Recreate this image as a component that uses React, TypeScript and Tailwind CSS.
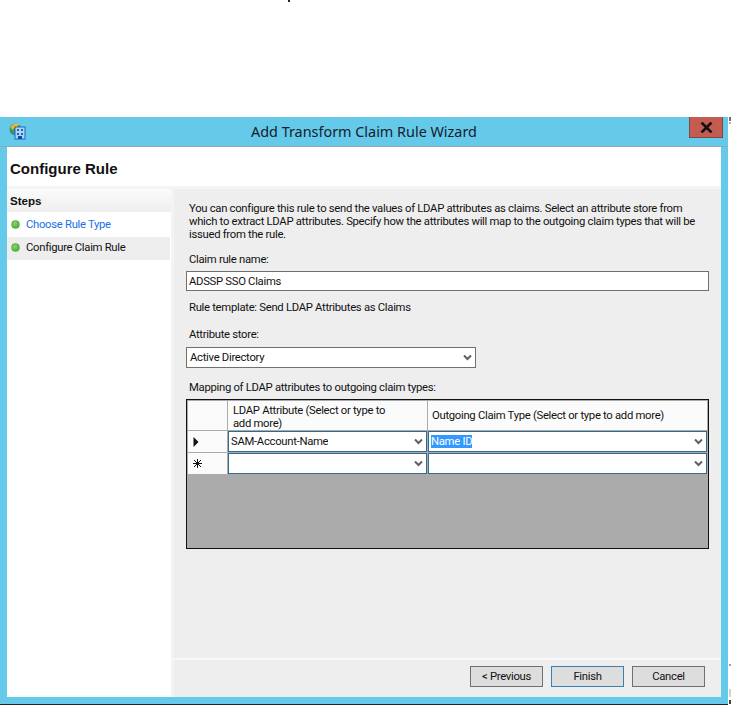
import React from "react";

const Chevron = () => (
  <svg width="9" height="7" viewBox="0 0 9 7" className="shrink-0">
    <path d="M1 1.5 L4.5 5 L8 1.5" fill="none" stroke="#606060" strokeWidth="2" />
  </svg>
);

const Dot = () => (
  <span className="w-[9px] h-[9px] rounded-full shrink-0 bg-[radial-gradient(circle_at_40%_35%,#7fdc5a,#3fa52c)] border border-[#6da765]" />
);

const Cell = ({ children }: { children?: React.ReactNode }) => (
  <div className="h-[21px] bg-white border border-[#336b8f] flex items-center justify-between pl-[2px] pr-[3px] min-w-0">
    <span className="truncate">{children}</span>
    <Chevron />
  </div>
);

const RowHead = ({ children }: { children: React.ReactNode }) => (
  <div className="h-[21px] bg-[#fbfbfb] flex items-center pl-[5px]">{children}</div>
);

const Btn = ({ label, focus }: { label: string; focus?: boolean }) => (
  <div
    className={`w-[73px] h-[21px] bg-[#dddddd] border flex items-center justify-center ${
      focus ? "border-[#3c7fb1]" : "border-[#707070]"
    }`}
  >
    {label}
  </div>
);

export default function App() {
  return (
    <div className="w-[731px] h-[706px] bg-white overflow-hidden relative font-['Roboto',sans-serif] text-[11.3px] tracking-[-0.3px] leading-[13px] text-[#111]">
      <div className="h-[117px] relative">
        <span className="absolute left-[288px] top-0 w-[2px] h-[2px] bg-[#222]" />
      </div>
      <span className="absolute left-[729px] top-[117px] w-[2px] h-[4px] bg-[#707070]" />
      <span className="absolute left-[729px] top-[122px] w-[2px] h-[2px] bg-[#b0b0b0]" />
      <span className="absolute left-[729px] top-[664px] w-[2px] h-[2px] bg-[#a0a0a0]" />
      <span className="absolute left-[729px] top-[689px] w-[2px] h-[8px] bg-[#c8d8d8]" />
      <span className="absolute left-[729px] top-[700px] w-[2px] h-[4px] bg-[#444]" />
      <div className="w-[728px] h-[588px] bg-[#65c9ea] border-b-[1px] border-[#222] flex flex-col relative">
        <div className="h-[30px] flex items-center justify-center border-b border-[#8aa9b8] shrink-0 relative">
          <svg width="17" height="17" viewBox="0 0 17 17" className="absolute left-[9px] top-[6px]">
            <circle cx="6.5" cy="6.5" r="6" fill="#3f9e4a" />
            <path d="M1.5 4 A6 6 0 0 1 10 1.5 L8 4 L5 5 L3.5 7 Z" fill="#f2b632" />
            <path d="M1 8 L4 8 L5 11 L3 11 Z" fill="#2f7fd0" />
            <rect x="6" y="4" width="10" height="12" fill="#a9d6f2" stroke="#1f66c0" />
            <path d="M8 6h2v2h-2zM12 6h2v2h-2zM8 10h2v2h-2zM12 10h2v2h-2z" fill="#1f66c0" />
            <rect x="9" y="13" width="4" height="3" fill="#1248a8" />
          </svg>
          <span className="font-['Noto_Sans',sans-serif] text-[14.4px] tracking-normal leading-[18px] text-[#16202a]">
            Add Transform Claim Rule Wizard
          </span>
          <div className="absolute left-[689px] top-0 w-[34px] h-[21px] bg-[#c45c52] border border-[#7a4a44] border-t-0 flex items-center justify-center">
            <svg width="13" height="11" viewBox="0 0 13 11">
              <path d="M1.5 0.5 L11.5 10.5 M11.5 0.5 L1.5 10.5" stroke="#111" strokeWidth="2.6" fill="none" />
            </svg>
          </div>
        </div>
        <div className="flex-1 flex flex-col ml-[7px] mr-[7px] mb-[7px] min-h-0 bg-[#f4f4f4]">
          <div className="h-[39px] bg-white shrink-0 flex items-center pl-[3px] pt-[4px] mb-[3px] font-bold font-['Liberation_Sans',sans-serif] tracking-normal text-[15px]">
            Configure Rule
          </div>
          <div className="flex-1 flex gap-[3px] min-h-0">
            <div className="w-[164px] bg-white flex flex-col shrink-0">
              <div className="h-[23px] bg-gradient-to-b from-[#fbfbfb] to-[#eeeeee] flex items-center pl-[3px] font-bold font-['Liberation_Sans',sans-serif] tracking-normal text-[11.6px]">
                Steps
              </div>
              <div className="h-[25px] flex items-center gap-[6px] pl-[4px] pb-[1px] text-[#1a6fe8]">
                <Dot />
                <span>Choose Rule Type</span>
              </div>
              <div className="h-[23px] w-[163px] flex items-center gap-[6px] pl-[4px] pb-[2px] bg-[#eeeeee]">
                <Dot />
                <span>Configure Claim Rule</span>
              </div>
            </div>
            <div className="flex-1 bg-[#eeeeee] flex flex-col min-w-0">
              <div className="flex-1 pl-[12px] pr-[12px] pt-[13px] min-h-0">
                <p className="ml-[3px] whitespace-nowrap">
                  You can configure this rule to send the values of LDAP attributes as claims. Select an attribute store from
                  <br />
                  which to extract LDAP attributes. Specify how the attributes will map to the outgoing claim types that will be
                  <br />
                  issued from the rule.
                </p>
                <div className="ml-[3px] mt-[12px]">Claim rule name:</div>
                <div className="mt-[5px] h-[20px] bg-white border border-[#707070] flex items-center pl-[2px]">ADSSP SSO Claims</div>
                <div className="ml-[3px] mt-[10px]">Rule template: Send LDAP Attributes as Claims</div>
                <div className="ml-[3px] mt-[14px]">Attribute store:</div>
                <div className="mt-[6px] w-[290px] h-[21px] bg-white border border-[#707070] flex items-center justify-between pl-[3px] pr-[3px]">
                  <span>Active Directory</span>
                  <Chevron />
                </div>
                <div className="ml-[3px] mt-[13px]">Mapping of LDAP attributes to outgoing claim types:</div>
                <div className="mt-[5px] w-[523px] h-[150px] bg-[#ababab] border border-[#111] p-[1px]">
                  <div className="grid grid-cols-[39px_199px_279px] gap-[1px]">
                    <div className="h-[29px] bg-[#fbfbfb]" />
                    <div className="h-[29px] bg-[#fbfbfb] pl-[5px] pt-[3px]">
                      LDAP Attribute (Select or type to
                      <br />
                      add more)
                    </div>
                    <div className="h-[29px] bg-[#fbfbfb] pl-[4px] flex items-center">
                      Outgoing Claim Type (Select or type to add more)
                    </div>
                    <RowHead>
                      <svg width="6" height="10" viewBox="0 0 6 10">
                        <path d="M0.5 0 L5.5 5 L0.5 10 Z" fill="#111" />
                      </svg>
                    </RowHead>
                    <Cell>SAM-Account-Name</Cell>
                    <Cell>
                      <span className="bg-[#3399ff] text-white">Name ID</span>
                    </Cell>
                    <RowHead>
                      <svg width="9" height="9" viewBox="0 0 9 9">
                        <path d="M4.5 0 V9 M0 4.5 H9 M1 1 L8 8 M8 1 L1 8" stroke="#111" strokeWidth="1" fill="none" />
                      </svg>
                    </RowHead>
                    <Cell />
                    <Cell />
                  </div>
                </div>
              </div>
              <div className="h-[39px] shrink-0 border-t-2 border-[#f8f8f8] flex items-start justify-end gap-[8px] pt-[6px] pr-[16px]">
                <Btn label="< Previous" />
                <Btn label="Finish" focus />
                <Btn label="Cancel" />
              </div>
            </div>
          </div>
        </div>
      </div>
    </div>
  );
}
